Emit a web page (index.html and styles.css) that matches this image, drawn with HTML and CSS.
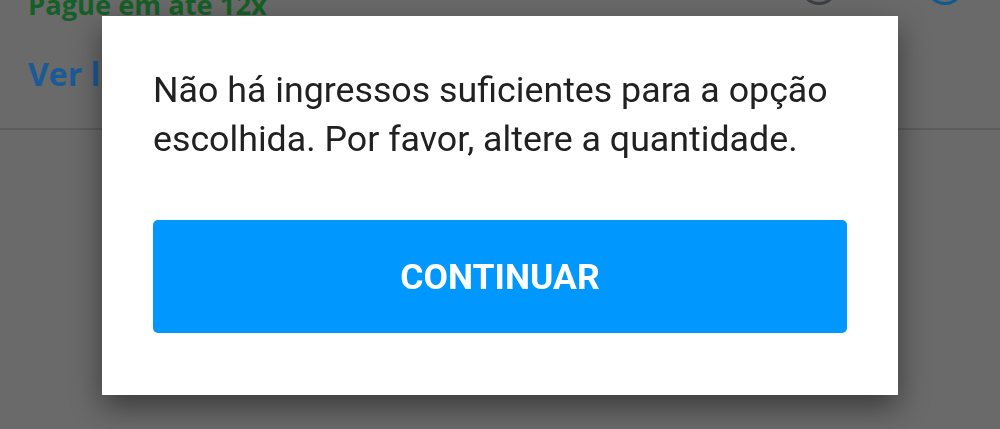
FILE: index.html
```html
<!DOCTYPE html>
<html lang="pt-BR">
<head>
  <meta charset="UTF-8">
  <meta name="viewport" content="width=device-width, initial-scale=1.0">
  <title>Ingressos</title>
  <link rel="stylesheet" href="styles.css">
</head>
<body>
  <div class="page">
    <div class="page-head">
      <div class="price-info">
        <p class="installments">Pague em até 12x</p>
        <a class="see-more" href="#">Ver lotes</a>
      </div>
      <div class="head-actions">
        <span class="round-btn round-btn-dark"></span>
        <span class="round-btn round-btn-blue"></span>
      </div>
    </div>
  </div>

  <div class="overlay">
    <div class="modal" role="dialog">
      <p class="modal-text">Não há ingressos suficientes para a opção escolhida. Por favor, altere a quantidade.</p>
      <button class="modal-btn" type="button">CONTINUAR</button>
    </div>
  </div>
</body>
</html>
```

FILE: styles.css
```css
* { box-sizing: border-box; }
html, body { height: 100%; }
body {
  margin: 0;
  background: #6a6a6a;
  font-family: Roboto, 'Noto Sans', sans-serif;
  overflow: hidden;
}

/* page behind the dialog */
.page-head {
  display: flex;
  justify-content: space-between;
  align-items: flex-start;
  height: 130px;
  padding: 0 0 0 28px;
  border-bottom: 2px solid #5c5c5c;
}
.price-info { margin-top: -14px; }
.installments {
  margin: 0;
  font-family: 'Open Sans', sans-serif;
  font-weight: 700;
  font-size: 27.3px;
  line-height: 37px;
  color: #165f26;
}
.see-more {
  display: block;
  margin-top: 29px;
  font-family: 'Open Sans', sans-serif;
  font-weight: 700;
  font-size: 32px;
  line-height: 44px;
  color: #1a5b96;
  text-decoration: none;
}
.head-actions {
  display: flex;
  gap: 88px;
  margin-top: -33px;
  margin-right: 36px;
}
.round-btn {
  width: 38px;
  height: 38px;
  border-radius: 50%;
  border: 3px solid #3c3f44;
}
.round-btn-blue { border-color: #0f5a91; }

/* dialog */
.overlay {
  position: fixed;
  inset: 0;
  display: flex;
  justify-content: center;
  align-items: flex-start;
  padding-top: 16px;
}
.modal {
  width: 796px;
  background: #fff;
  padding: 50px 51px 62px 51px;
  box-shadow: 0 12px 28px rgba(0,0,0,0.45);
}
.modal-text {
  margin: 0 0 56px 0;
  font-size: 35.75px;
  line-height: 49px;
  color: #212121;
}
.modal-btn {
  display: block;
  width: 100%;
  height: 113px;
  border: none;
  border-radius: 5px;
  background: #0098fe;
  color: #fff;
  font-family: Roboto, sans-serif;
  font-weight: 700;
  font-size: 35.5px;
  cursor: pointer;
}
```
